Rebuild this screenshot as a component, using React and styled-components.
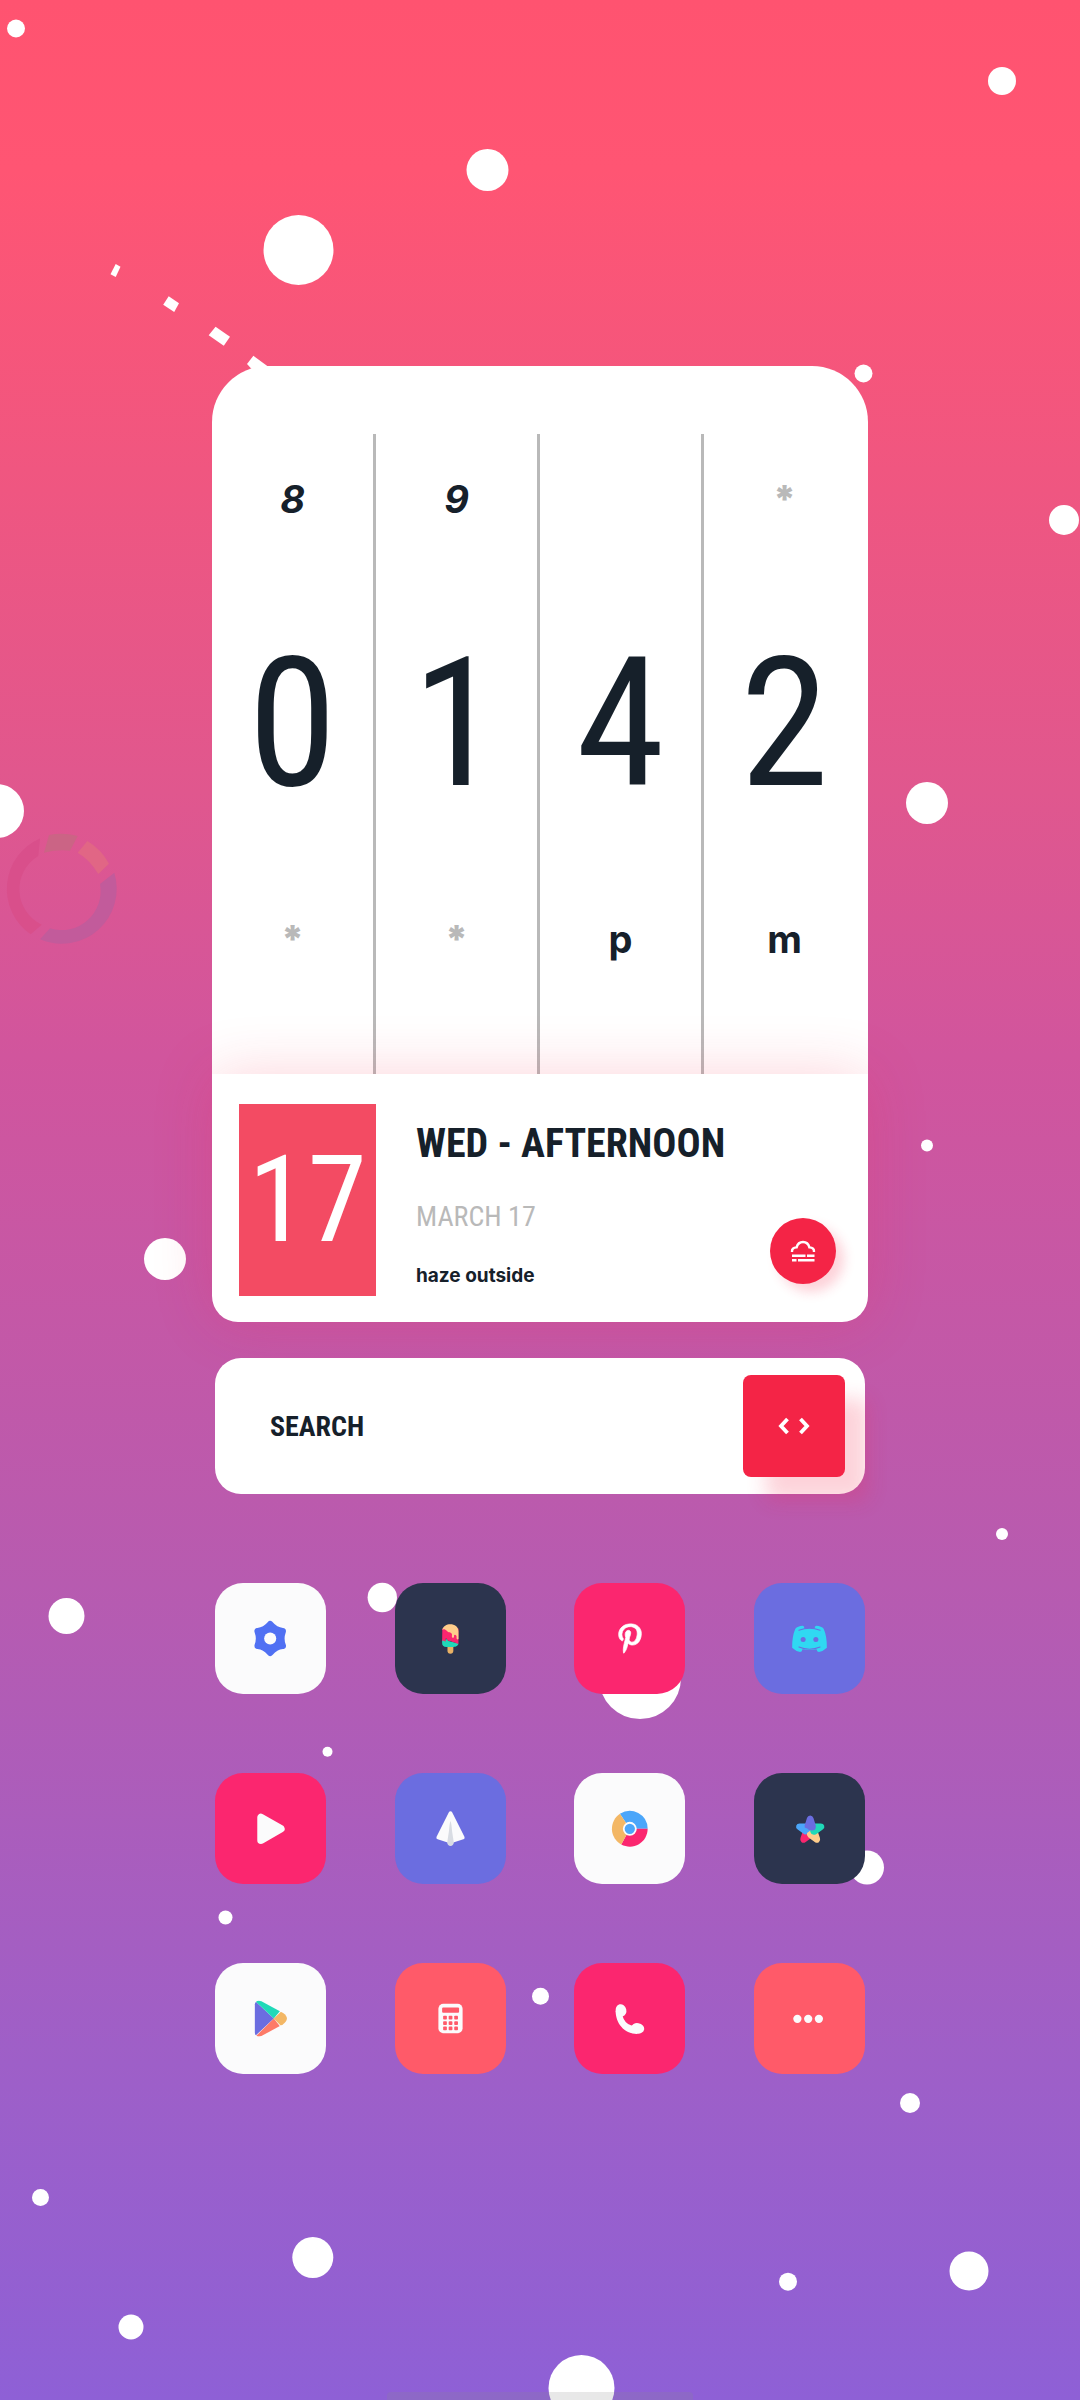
import React from "react";
import styled, { createGlobalStyle } from "styled-components";
import { FaPinterestP } from "react-icons/fa";

const ink = "#16202a";
const red = "#f42446";
const muted = "#b9b9b9";
const condensed = `"Roboto Condensed", "Liberation Sans Narrow", "Liberation Sans", sans-serif`;
const rounded = `Inter, "Open Sans", sans-serif`;

const GlobalStyle = createGlobalStyle`
  *, *::before, *::after { box-sizing: border-box; }
  body { margin: 0; background: #8f60d6; }
`;

const Screen = styled.main`
  position: relative;
  min-height: 100vh;
  padding: 366px 24px 240px;
  display: flex;
  flex-direction: column;
  align-items: center;
  overflow: hidden;
  color: ${ink};
  font-family: ${rounded};
  background: linear-gradient(180deg, #ff5370 0, #ff5573 7%, #e0578e 33%, #d1559d 44%, #b75bb0 66%, #9e5fc8 86%, #8e60d6 100%);
`;

const Sky = styled.svg`
  position: absolute;
  inset: 0;
  width: 100%;
  height: 100%;
`;

const Widget = styled.section`
  position: relative;
  width: 100%;
  max-width: 656px;
`;

const ClockFace = styled.div`
  padding-top: 68px;
  display: grid;
  grid-template-columns: repeat(4, 1fr);
  background: #fff;
  border-radius: 56px 56px 0 0;
`;

const Reel = styled.div`
  display: grid;
  grid-template-rows: 130px 320px 110px;
  height: 640px;
  align-items: center;
  justify-items: center;
  border-right: 3px solid ${muted};
  &:last-child { border-right-color: transparent; }
`;

const ReelMark = styled.span`
  font-size: 38px;
  line-height: 40px;
  font-weight: ${(p) => (p.$faint ? 900 : 700)};
  color: ${(p) => (p.$faint ? muted : ink)};
  font-style: ${(p) => (p.$slanted ? "italic" : "normal")};
`;

const ReelDigit = styled.span`
  font-family: ${condensed};
  font-size: 180px;
  line-height: 204px;
`;

const DatePanel = styled.div`
  position: relative;
  display: flex;
  align-items: flex-end;
  padding: 30px 32px 26px 27px;
  background: #fff;
  border-radius: 0 0 26px 26px;
  box-shadow: 0 0 60px rgba(244, 36, 70, 0.2);
`;

const DayTile = styled.div`
  flex: none;
  display: grid;
  place-items: center;
  width: 137px;
  height: 192px;
  background: #f34b63;
  color: #fff;
  font-family: ${condensed};
  font-size: 120px;
  line-height: 120px;
`;

const DateText = styled.div`
  flex: 1;
  align-self: stretch;
  padding: 14px 0 8px 40px;
  display: flex;
  flex-direction: column;
  justify-content: space-between;
  white-space: nowrap;
`;

const Title = styled.h1`
  margin: 0;
  font-family: ${condensed};
  font-size: 40px;
  line-height: 52px;
  font-weight: 700;
`;

const Subtitle = styled.p`
  margin: 0;
  font-family: ${condensed};
  font-size: 28px;
  line-height: 36px;
  color: ${muted};
`;

const Note = styled.p`
  margin: 0;
  font-size: 19px;
  line-height: 24px;
  font-weight: 700;
`;

const RoundButton = styled.button`
  flex: none;
  width: 66px;
  height: 66px;
  margin-bottom: 12px;
  padding: 0;
  display: grid;
  place-items: center;
  border: 0;
  border-radius: 50%;
  background: ${red};
  box-shadow: 8px 8px 12px rgba(244, 36, 70, 0.2);
`;

const SearchBar = styled.form`
  position: relative;
  width: 100%;
  max-width: 650px;
  margin-top: 36px;
  padding: 17px 20px 17px 55px;
  display: flex;
  align-items: center;
  background: #fff;
  border-radius: 26px;
`;

const SearchInput = styled.input`
  flex: 1;
  min-width: 0;
  height: 60px;
  padding: 0;
  border: 0;
  outline: 0;
  background: transparent;
  color: ${ink};
  font-family: ${condensed};
  font-size: 28px;
  font-weight: 700;
  &::placeholder { color: ${ink}; opacity: 1; }
`;

const CodeButton = styled.button`
  flex: none;
  width: 102px;
  height: 102px;
  padding: 0;
  display: grid;
  place-items: center;
  border: 0;
  border-radius: 8px;
  background: ${red};
  box-shadow: 23px 24px 20px rgba(244, 36, 70, 0.2);
`;

const AppGrid = styled.nav`
  position: relative;
  width: 100%;
  max-width: 650px;
  margin-top: 89px;
  display: grid;
  grid-template-columns: repeat(4, 111px);
  justify-content: space-between;
  row-gap: 79px;
`;

const AppButton = styled.button`
  width: 111px;
  height: 111px;
  padding: 0;
  display: grid;
  place-items: center;
  border: 0;
  border-radius: 28px;
  background: ${(p) => p.$tone};
  color: #fff;
`;

const HomeHandle = styled.div`
  position: absolute;
  bottom: 0;
  left: 50%;
  width: 306px;
  height: 8px;
  margin-left: -153px;
  border-radius: 4px 4px 0 0;
  background: rgba(140, 140, 140, 0.2);
`;

const stars = [
  [16, 28.5, 9], [1002, 81, 14], [487.5, 170, 21], [298.5, 250, 35], [863.5, 373.5, 9],
  [1064, 520, 15], [927, 803, 21], [-3, 811, 27], [927, 1145.5, 6], [165, 1259, 21],
  [66.5, 1616, 18], [1002, 1534, 6], [382.3, 1597.5, 14.7], [327.5, 1751.8, 5],
  [640, 1678, 41], [867, 1867.5, 17], [225.5, 1917.5, 7], [540.5, 1996.3, 8.5],
  [910, 2103, 10], [40.5, 2197.5, 8.5], [312.8, 2257.5, 20.5], [788, 2281.7, 9],
  [969, 2271, 19.5], [131, 2327, 12.5], [581.5, 2388, 33],
];

const comet = [
  "115.7,264 120.5,266.7 115.7,277 110.5,274.3",
  "168.7,296.3 179,303.3 174.2,312 163.2,304.7",
  "215.6,326.7 230,336.7 223.8,345.7 208.7,335.3",
  "253.4,355.7 270,368 258,376 247,364",
];

const petals = [
  ["#fb266f", 216], ["#ffcd8b", 144], ["#20d9b8", 72], ["#4ba6fa", 288], ["#6b6de0", 0],
];

const apps = [
  { name: "Settings", tone: "#fbfbfc", icon: (
    <g transform="translate(54.7 55)">
      <path d="M0-14Q5-8 12.3-7.2Q9.6 0 12.3 7.2Q5 8 0 14Q-5 8-12.3 7.2Q-9.6 0-12.3-7.2Q-5-8 0-14Z" fill="#5070f3" stroke="#5070f3" strokeWidth="6.6" strokeLinejoin="round" />
      <circle r="6" fill="#fbfbfc" />
    </g>
  ) },
  { name: "Ice cream", tone: "#2c344e", icon: (
    <g>
      <path d="M52 61h5.8v6.2a2.9 2.9 0 0 1-5.8 0Z" fill="#e9b165" />
      <path d="M46.7 56L49.5 57L51 55.5L53 57.5L62.9 60V59.5C62.9 62 60.5 63.4 58 63.4H51C48 63.4 46.5 62 46.7 59Z" fill="#20d9b8" />
      <path d="M46.9 45H62.9V60Q61 60.5 59.5 59Q57 58.5 55 57.5Q53 57.8 51.8 56.5Q51.5 54.5 50.3 55V57.5Q49.5 59 48.8 57L46.7 57.5Z" fill="#fb266f" />
      <path d="M46.9 46.5C48 38.8 62.9 38.5 62.9 48V55.5Q62 56.5 61 55V52.5Q59.3 50.5 58.5 52V53.5Q57.4 55.2 56.4 53.5V50.5C55 48 53 49.5 51.5 47.5C50 46 48 45.2 46.9 46.5Z" fill="#ffcd8b" />
    </g>
  ) },
  { name: "Pinterest", tone: "#fb266f", icon: <FaPinterestP x="40.5" y="40" size="30" color="#fff" stroke="#fff" strokeWidth="12" /> },
  { name: "Discord", tone: "#6b6de0", icon: (
    <g>
      <path d="M48.5 42.4Q50.2 42.8 49.8 45.2Q55 44.4 60.2 45.2Q59.8 42.8 61.5 42.4Q67 42.8 69 45.4Q72.4 53 72.2 64.2Q68.5 67.8 64.3 68.3Q62.2 68 62 65.6Q55 67 48 65.6Q47.8 68 45.7 68.3Q41.5 67.8 37.8 64.2Q37.6 53 41 45.4Q43 42.8 48.5 42.4Z" fill="#30d8f2" />
      <path d="M44.5 46.8Q55 42.7 65.5 46.8M44.5 63.4Q55 67.7 65.5 63.4" fill="none" stroke="#6b6de0" strokeWidth="1" strokeLinecap="round" />
      <circle cx="48.7" cy="56" r="2.5" fill="#6b6de0" />
      <circle cx="61.3" cy="56" r="2.5" fill="#6b6de0" />
    </g>
  ) },
  { name: "Video", tone: "#fb266f", icon: <path d="M45.6 44V66.6L65.3 55.3Z" fill="#fbfbfc" stroke="#fbfbfc" strokeWidth="7.4" strokeLinejoin="round" /> },
  { name: "Paper plane", tone: "#6b6de0", icon: (
    <g>
      <path d="M55 39.8L67.2 64L55 67.8L42.8 64Z" fill="#fbfbfc" stroke="#fbfbfc" strokeWidth="3.6" strokeLinejoin="round" />
      <path d="M55 47.5Q56 50 56.6 58L58.3 69.2Q57.8 72.3 55 72.3Q52.2 72.3 51.7 69.2L53.4 58Q54 50 55 47.5Z" fill="#d8dce3" />
    </g>
  ) },
  { name: "Browser", tone: "#fbfbfc", icon: (
    <g transform="translate(55.3 55.3)">
      <path d="M0 0L-9.8-14.8A17.7 17.7 0 0 1 17.7 0Z" fill="#4ba6fa" />
      <path d="M0 0H17.7A17.7 17.7 0 0 1-8.5 15.5Z" fill="#fb266f" />
      <path d="M0 0L-8.5 15.5A17.7 17.7 0 0 1-9.8-14.8Z" fill="#f3b765" />
      <circle r="6" fill="#4ba6fa" stroke="#fbfbfc" strokeWidth="1.8" />
    </g>
  ) },
  { name: "Gallery", tone: "#2c344e", icon: (
    <g transform="translate(55.7 56.7)">
      {petals.map(([color, angle]) => (
        <path key={color} transform={`rotate(${angle})`} d="M0-14.6Q2.4-14.6 3.2-12L5.6-4.4Q6 .4 1.6.4Q-1.6.4-3.2-2Q-6-1.6-5.6-4.4L-3.2-12Q-2.4-14.6 0-14.6Z" fill={color} />
      ))}
    </g>
  ) },
  { name: "Store", tone: "#fbfbfc", icon: (
    <g>
      <clipPath id="store-shape">
        <path d="M39.4 41Q40.4 36 46 37.8L67.5 49.6Q75 55 67.5 60.6L46 72.4Q40.4 74 39.4 69Z" />
      </clipPath>
      <g clipPath="url(#store-shape)">
        <path d="M38 36L58.3 55L38 74Z" fill="#6b6de0" />
        <path d="M38 36H74L58.3 55Z" fill="#20d9b8" />
        <path d="M38 75H74L58.3 55Z" fill="#fd7b68" />
        <path d="M58.3 55L74 40V71Z" fill="#f3b765" />
      </g>
    </g>
  ) },
  { name: "Calculator", tone: "#ff5a69", icon: (
    <g>
      <rect x="43" y="40.3" width="24" height="29.4" rx="5" fill="#fbfbfc" />
      <rect x="46.7" y="44" width="16.8" height="5.4" rx="1" fill="#ff5a69" />
      {[52.3, 57.7, 63].map((y) => [47.7, 53.2, 58.7].map((x) => (
        <rect key={`${x}-${y}`} x={x} y={y} width="3.7" height="3.7" rx=".8" fill="#ff5a69" />
      )))}
    </g>
  ) },
  { name: "Phone", tone: "#fb266f", icon: (
    <g fill="#fbfbfc">
      <path d="M41.2 47C41.2 59.5 49.5 70 62.5 70.3L66 65L57 62Q50 60 48 52Z" />
      <ellipse cx="46.6" cy="47" rx="5.3" ry="6.2" transform="rotate(-14 46.6 47)" />
      <ellipse cx="63" cy="64.8" rx="6.6" ry="5.2" transform="rotate(10 63 64.8)" />
    </g>
  ) },
  { name: "More", tone: "#ff5a69", icon: (
    <g fill="#fbfbfc">
      <circle cx="43" cy="55.3" r="4.1" />
      <circle cx="53.7" cy="55.3" r="4.1" />
      <circle cx="64.3" cy="55.3" r="4.1" />
    </g>
  ) },
];

const reels = [
  { above: "8", digit: "0", below: "*" },
  { above: "9", digit: "1", below: "*" },
  { above: "", digit: "4", below: "p" },
  { above: "*", digit: "2", below: "m" },
];

function Backdrop() {
  return (
    <Sky viewBox="0 0 1080 2400" preserveAspectRatio="xMidYMid slice" aria-hidden="true">
      <g fill="#fff">
        {stars.map(([x, y, r]) => <circle key={`${x}-${y}`} cx={x} cy={y} r={r} />)}
        {comet.map((points) => <polygon key={points} points={points} />)}
      </g>
      <path d="M40 838.5L38.3 856A39 39 0 0 0 41.7 924.7L30.7 934.3A55 55 0 0 1 40 838.5Z" fill="#d94f8b" />
      <path d="M49 835Q63 832 77.7 836L70 850.7Q57 849.5 44 852.7Z" fill="#cb6485" />
      <path d="M87.3 841Q101 849 109 863.7L98.3 874Q90 860 77.7 852.7Z" fill="#e16685" />
      <path d="M114.3 872.7A55 55 0 0 1 40 939.3L50 928.3A39 39 0 0 0 100 884Z" fill="#c25b9b" />
    </Sky>
  );
}

export default function App() {
  return (
    <Screen>
      <GlobalStyle />
      <Backdrop />
      <Widget>
        <ClockFace>
          {reels.map(({ above, digit, below }) => (
            <Reel key={digit}>
              <ReelMark $faint={above === "*"} $slanted={above !== "*"}>{above}</ReelMark>
              <ReelDigit>{digit}</ReelDigit>
              <ReelMark $faint={below === "*"}>{below}</ReelMark>
            </Reel>
          ))}
        </ClockFace>
        <DatePanel>
          <DayTile>17</DayTile>
          <DateText>
            <Title>WED - AFTERNOON</Title>
            <Subtitle>MARCH 17</Subtitle>
            <Note>haze outside</Note>
          </DateText>
          <RoundButton type="button" aria-label="Weather">
            <svg width="28" height="24" viewBox="0 0 28 24" fill="none" stroke="#fff" strokeWidth="2.4">
              <path d="M3 13Q2.6 8.6 7.6 8.4Q9 3 14 3Q19 3 20.4 8.4Q25.4 8.6 25 13" />
              <path d="M3 16.8H16.5M18 16.8H25.5M3 21.3H7.5M9 21.3H25.5" strokeWidth="2.6" />
            </svg>
          </RoundButton>
        </DatePanel>
      </Widget>
      <SearchBar onSubmit={(e) => e.preventDefault()}>
        <SearchInput type="text" aria-label="Search" placeholder="SEARCH" />
        <CodeButton type="submit" aria-label="Run search">
          <svg width="34" height="18" viewBox="0 0 34 18" fill="none" stroke="#fff" strokeWidth="3.8">
            <path d="M10.5 2L4 9L10.5 16M23.5 2L30 9L23.5 16" />
          </svg>
        </CodeButton>
      </SearchBar>
      <AppGrid aria-label="Apps">
        {apps.map(({ name, tone, icon }) => (
          <AppButton key={name} type="button" aria-label={name} $tone={tone}>
            <svg width="111" height="111" viewBox="0 0 110 110" aria-hidden="true">{icon}</svg>
          </AppButton>
        ))}
      </AppGrid>
      <HomeHandle />
    </Screen>
  );
}
